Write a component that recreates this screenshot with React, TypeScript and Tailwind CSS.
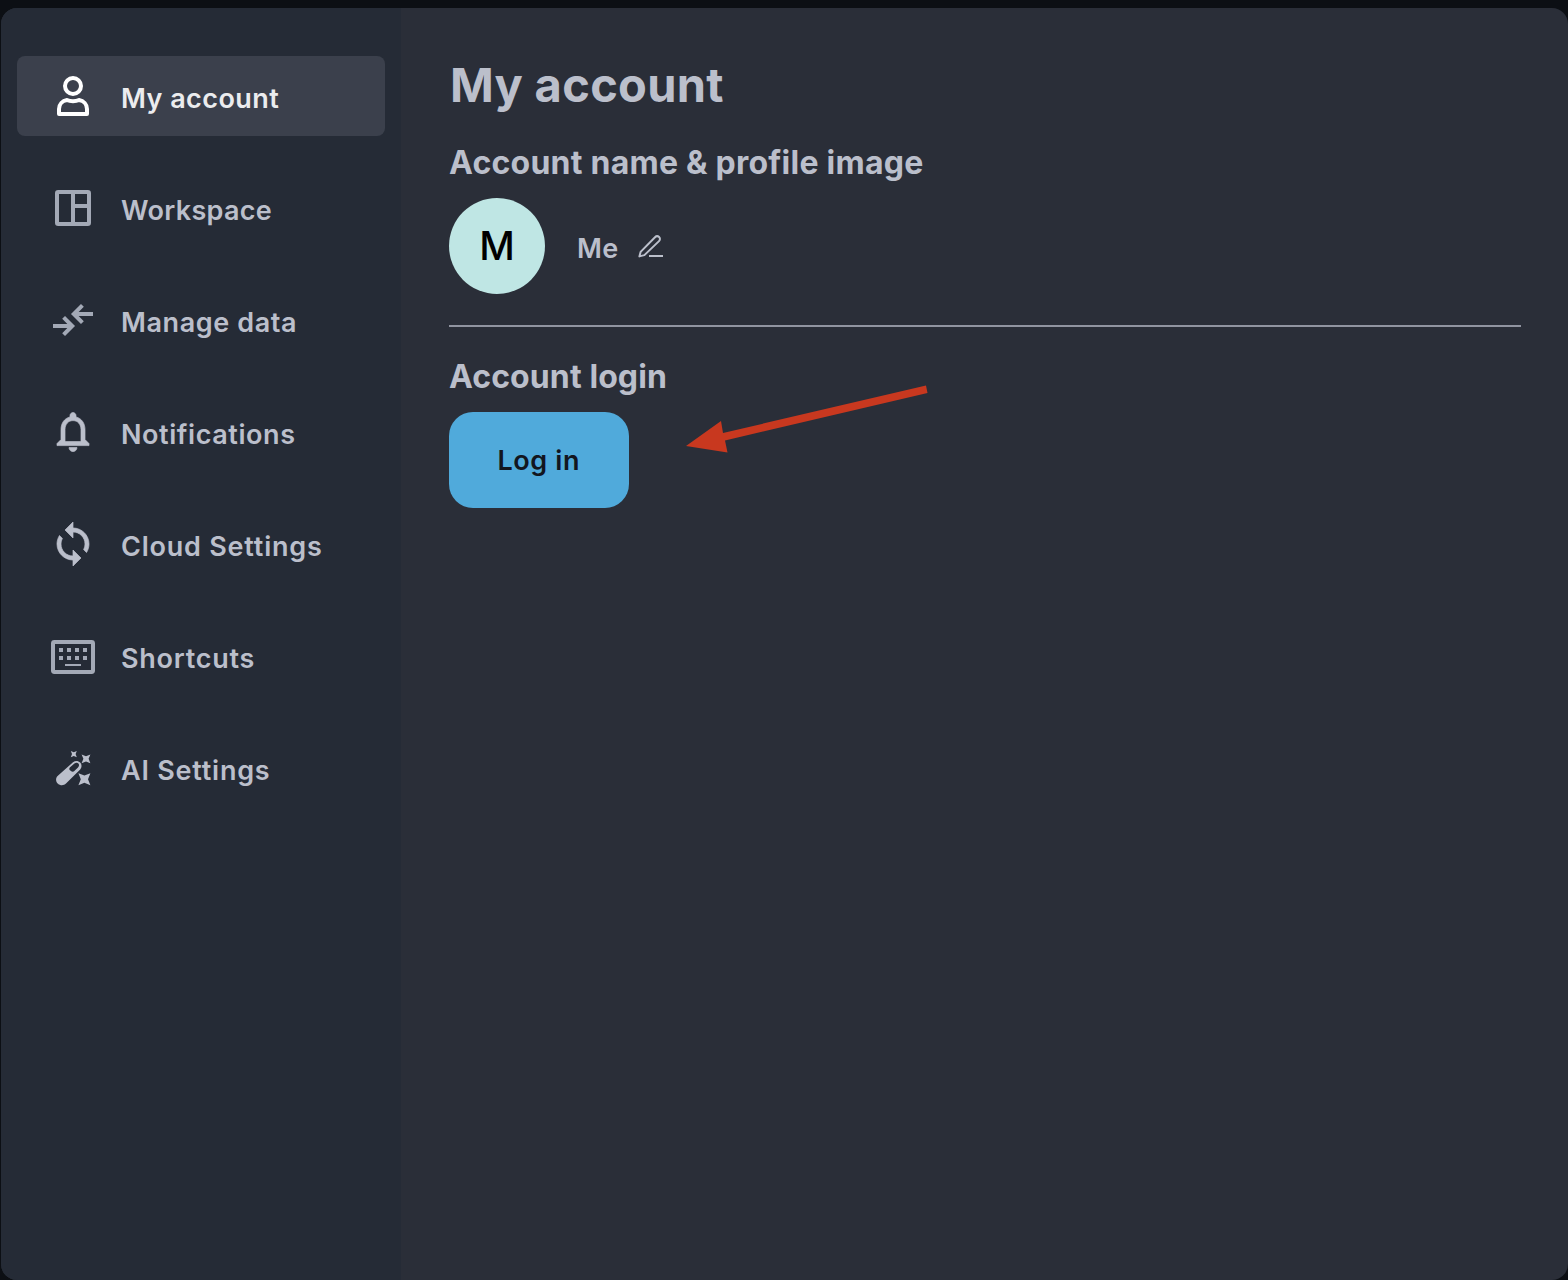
import type { ReactNode } from "react";

const icons: Record<string, ReactNode> = {
  account: (
    <g fill="none" stroke="#ffffff" strokeWidth="2" strokeLinejoin="round">
      <circle cx="12" cy="7" r="4" />
      <path d="M9 14C6.7 14.4 5 16.2 5 18.5V21H19V18.5C19 16.2 17.3 14.4 15 14C13.4 14.8 10.6 14.8 9 14Z" />
    </g>
  ),
  workspace: (
    <g fill="none" stroke="#a3a9b6" strokeWidth="2">
      <rect x="4" y="4" width="16" height="16" rx="0.6" />
      <path d="M12 4V20M12 11H20" />
    </g>
  ),
  data: (
    <path
      d="M2 15H11.8M7.3 10.7L11.6 15L7.3 19.3M22 9H12.2M16.7 4.7L12.4 9L16.7 13.3"
      fill="none"
      stroke="#a3a9b6"
      strokeWidth="2"
    />
  ),
  bell: (
    <path
      stroke="#bbbfcb"
      strokeWidth="0.35"
      transform="translate(0 -0.2)"
      d="M12 22c1.1 0 2-.9 2-2h-4c0 1.1.9 2 2 2zm6-6v-5c0-3.07-1.63-5.64-4.5-6.32V4c0-.83-.67-1.5-1.5-1.5s-1.5.67-1.5 1.5v.68C7.64 5.36 6 7.92 6 11v5l-2 2v1h16v-1l-2-2zm-2 1H8v-6c0-2.48 1.51-4.5 4-4.5s4 2.02 4 4.5v6z"
    />
  ),
  sync: (
    <path
      stroke="#bbbfcb"
      strokeWidth="0.35"
      d="M12 4V1L8 5l4 4V6c3.31 0 6 2.69 6 6 0 1.01-.25 1.97-.7 2.8l1.46 1.46C19.54 15.03 20 13.57 20 12c0-4.42-3.58-8-8-8zm0 14c-3.31 0-6-2.69-6-6 0-1.01.25-1.97.7-2.8L5.24 7.74C4.46 8.97 4 10.43 4 12c0 4.42 3.58 8 8 8v3l4-4-4-4v3z"
    />
  ),
  keyboard: (
    <g fill="#a3a9b6">
      <rect x="2" y="5" width="20" height="15" rx="0.7" fill="none" stroke="#a3a9b6" strokeWidth="2" />
      <path d="M5 8h2v2H5zM9 8h2v2H9zM13 8h2v2h-2zM17 8h2v2h-2zM5 12h2v2H5zM9 12h2v2H9zM13 12h2v2h-2zM17 12h2v2h-2zM8 16h8v1H8z" />
    </g>
  ),
  wand: (
    <g>
      <path
        fillRule="evenodd"
        d="M4.3 16L12 9.1C13.3 8.1 14.7 8.4 15.6 9.3C16.5 10.3 16.5 11.6 15.6 12.7L8.5 19.8C7.4 20.9 5.6 20.9 4.5 19.9C3.3 18.8 3.2 17.1 4.3 16ZM10.4 11.7L12.7 9.8C13.5 9.2 14.3 9.3 14.7 9.8C15.2 10.4 15.1 11 14.5 11.7L12.4 13.8C11.7 14 11.2 13.8 10.9 13.4C10.2 13.2 9.9 12.4 10.4 11.7Z"
      />
      <path d="M10.9 3.5L12.4 4.1L13.9 3.5L13.3 5L13.9 6.6L12.4 6L10.9 6.6L11.5 5Z" />
      <path d="M16.3 5.2L18.5 6.1L20.7 5.2L19.8 7.4L20.7 9.6L18.5 8.7L16.3 9.6L17.2 7.4Z" />
      <path d="M14.7 14.6L17.7 15.8L20.7 14.6L19.5 17.6L20.7 20.6L17.7 19.4L14.7 20.6L15.9 17.6Z" />
    </g>
  ),
};

const items = [
  { icon: "account", label: "My account", cls: "tracking-[0.45px]" },
  { icon: "workspace", label: "Workspace", cls: "tracking-[0.32px]" },
  { icon: "data", label: "Manage data", cls: "tracking-[0.6px]" },
  { icon: "bell", label: "Notifications", cls: "tracking-[0.57px]" },
  { icon: "sync", label: "Cloud Settings", cls: "tracking-[0.78px]" },
  { icon: "keyboard", label: "Shortcuts", cls: "tracking-[0.75px]" },
  { icon: "wand", label: "AI Settings", cls: "tracking-[0.77px]" },
];

function Sidebar() {
  return (
    <nav className="flex w-[400px] shrink-0 flex-col gap-8 bg-[#252b36] px-4 pt-12">
      {items.map((item, i) => (
        <a
          key={item.label}
          className={
            i === 0
              ? "flex h-20 items-center gap-6 rounded-lg bg-[#3b404c] pl-8 text-[#ebecee]"
              : "flex h-20 items-center gap-6 rounded-lg pl-8 text-[#bbbfcb]"
          }
        >
          <svg viewBox="0 0 24 24" className="size-12 shrink-0 fill-[#bbbfcb]">
            {icons[item.icon]}
          </svg>
          <span className={"whitespace-nowrap pt-1.5 text-[27px] leading-9 font-semibold " + item.cls}>
            {item.label}
          </span>
        </a>
      ))}
    </nav>
  );
}

export default function App() {
  return (
    <div className="h-[1280px] w-[1568px] overflow-hidden bg-[#0c0f14] pt-2 pl-px font-['Inter',sans-serif]">
      <div className="relative flex h-[1272px] overflow-hidden rounded-2xl bg-[#2a2e38]">
        <Sidebar />
        <main className="flex-1 pt-[47px] pr-[47px] pl-12 text-[#bbbfcb]">
          <h1 className="pl-px text-[47px] leading-[60px] font-bold tracking-[0.3px]">My account</h1>
          <h2 className="mt-7 text-[32px] leading-10 font-bold tracking-[0.24px]">Account name &amp; profile image</h2>
          <div className="mt-[15px] flex h-24 items-center">
            <div className="flex size-24 items-center justify-center rounded-full bg-[#bfe6e4] text-[39px] font-medium text-black">
              M
            </div>
            <span className="ml-8 pt-1.5 text-[27px] leading-9 font-semibold tracking-[0.3px]">Me</span>
            <svg viewBox="0 0 40 36" className="ml-[13px] h-9 w-10 fill-none stroke-[#bbbfcb] stroke-2">
              <path
                strokeLinejoin="round"
                d="M8.4 28.4L9.6 23.9L24 9.2C25.2 8 26.9 7.9 28.1 9C29.3 10.1 29.2 11.9 28 13.1L13.4 27.1ZM18 28H32"
              />
            </svg>
          </div>
          <hr className="mt-[31px] border-t-2 border-[#9094a0]" />
          <h2 className="mt-[30px] text-[32px] leading-10 font-bold tracking-[0.1px]">Account login</h2>
          <button className="mt-[15px] h-24 w-[179.5px] rounded-3xl bg-[#50aadb] pt-0.5 text-[27px] font-semibold tracking-[0.6px] text-[#12161f]">
            Log in
          </button>
        </main>
        <svg viewBox="0 0 250 80" className="pointer-events-none absolute top-[372px] left-[679px] h-20 w-[250px] fill-[#c8381f]">
          <path d="M6 66L41 41L43 53L246 5.5L247.5 13L45 60.5L47.5 72.5Z" />
        </svg>
      </div>
    </div>
  );
}
